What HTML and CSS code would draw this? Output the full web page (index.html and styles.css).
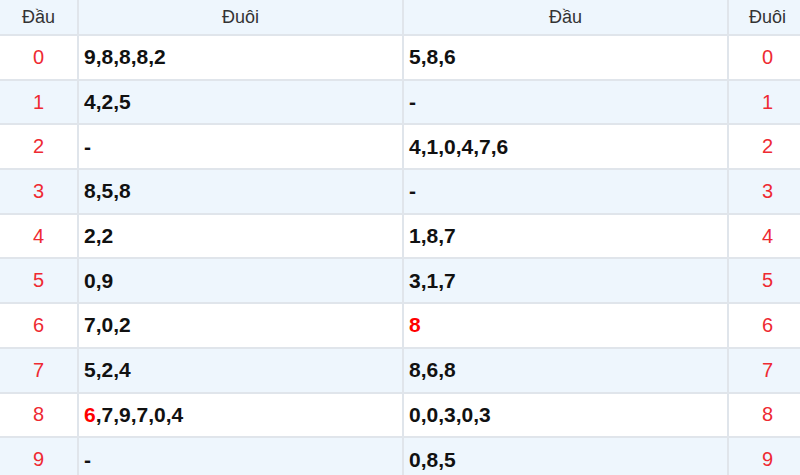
FILE: index.html
```html
<!DOCTYPE html>
<html lang="vi">
<head>
<meta charset="utf-8">
<title>Lô tô Đầu Đuôi</title>
<link rel="stylesheet" href="styles.css">
</head>
<body>
<table class="loto">
  <thead>
    <tr><th class="num">Đầu</th><th>Đuôi</th><th>Đầu</th><th class="num">Đuôi</th></tr>
  </thead>
  <tbody>
    <tr><td class="num">0</td><td class="val">9,8,8,8,2</td><td class="val">5,8,6</td><td class="num">0</td></tr>
    <tr><td class="num">1</td><td class="val">4,2,5</td><td class="val">-</td><td class="num">1</td></tr>
    <tr><td class="num">2</td><td class="val">-</td><td class="val">4,1,0,4,7,6</td><td class="num">2</td></tr>
    <tr><td class="num">3</td><td class="val">8,5,8</td><td class="val">-</td><td class="num">3</td></tr>
    <tr><td class="num">4</td><td class="val">2,2</td><td class="val">1,8,7</td><td class="num">4</td></tr>
    <tr><td class="num">5</td><td class="val">0,9</td><td class="val">3,1,7</td><td class="num">5</td></tr>
    <tr><td class="num">6</td><td class="val">7,0,2</td><td class="val"><span class="hl">8</span></td><td class="num">6</td></tr>
    <tr><td class="num">7</td><td class="val">5,2,4</td><td class="val">8,6,8</td><td class="num">7</td></tr>
    <tr><td class="num">8</td><td class="val"><span class="hl">6</span>,7,9,7,0,4</td><td class="val">0,0,3,0,3</td><td class="num">8</td></tr>
    <tr><td class="num">9</td><td class="val">-</td><td class="val">0,8,5</td><td class="num">9</td></tr>
  </tbody>
</table>
</body>
</html>
```
FILE: styles.css
```css
html, body {
  margin: 0;
  padding: 0;
  background: #ffffff;
  overflow: hidden;
}
body {
  width: 800px;
  height: 475px;
  font-family: "Liberation Sans", Arial, sans-serif;
}
.loto {
  border-collapse: collapse;
  width: 808px;
  table-layout: fixed;
}
.loto th,
.loto td {
  border: 2px solid #e0e5eb;
  padding: 0 5px;
}
.loto tr > :first-child { border-left: none; }
.loto thead tr > * { border-top: none; }
.loto th {
  height: 34px;
  background: #eef6fd;
  color: #333333;
  font-weight: normal;
  font-size: 18px;
  text-align: center;
}
.loto th.num { width: 67px; }
.loto td {
  height: 42.7px;
  font-size: 20px;
}
.loto tbody tr:nth-child(even) td { background: #eef6fd; }
.loto td.num {
  text-align: center;
  color: #ee2a32;
}
.loto td.val {
  font-weight: bold;
  font-size: 21px;
  color: #111111;
}
.hl { color: #ff0000; }
```
